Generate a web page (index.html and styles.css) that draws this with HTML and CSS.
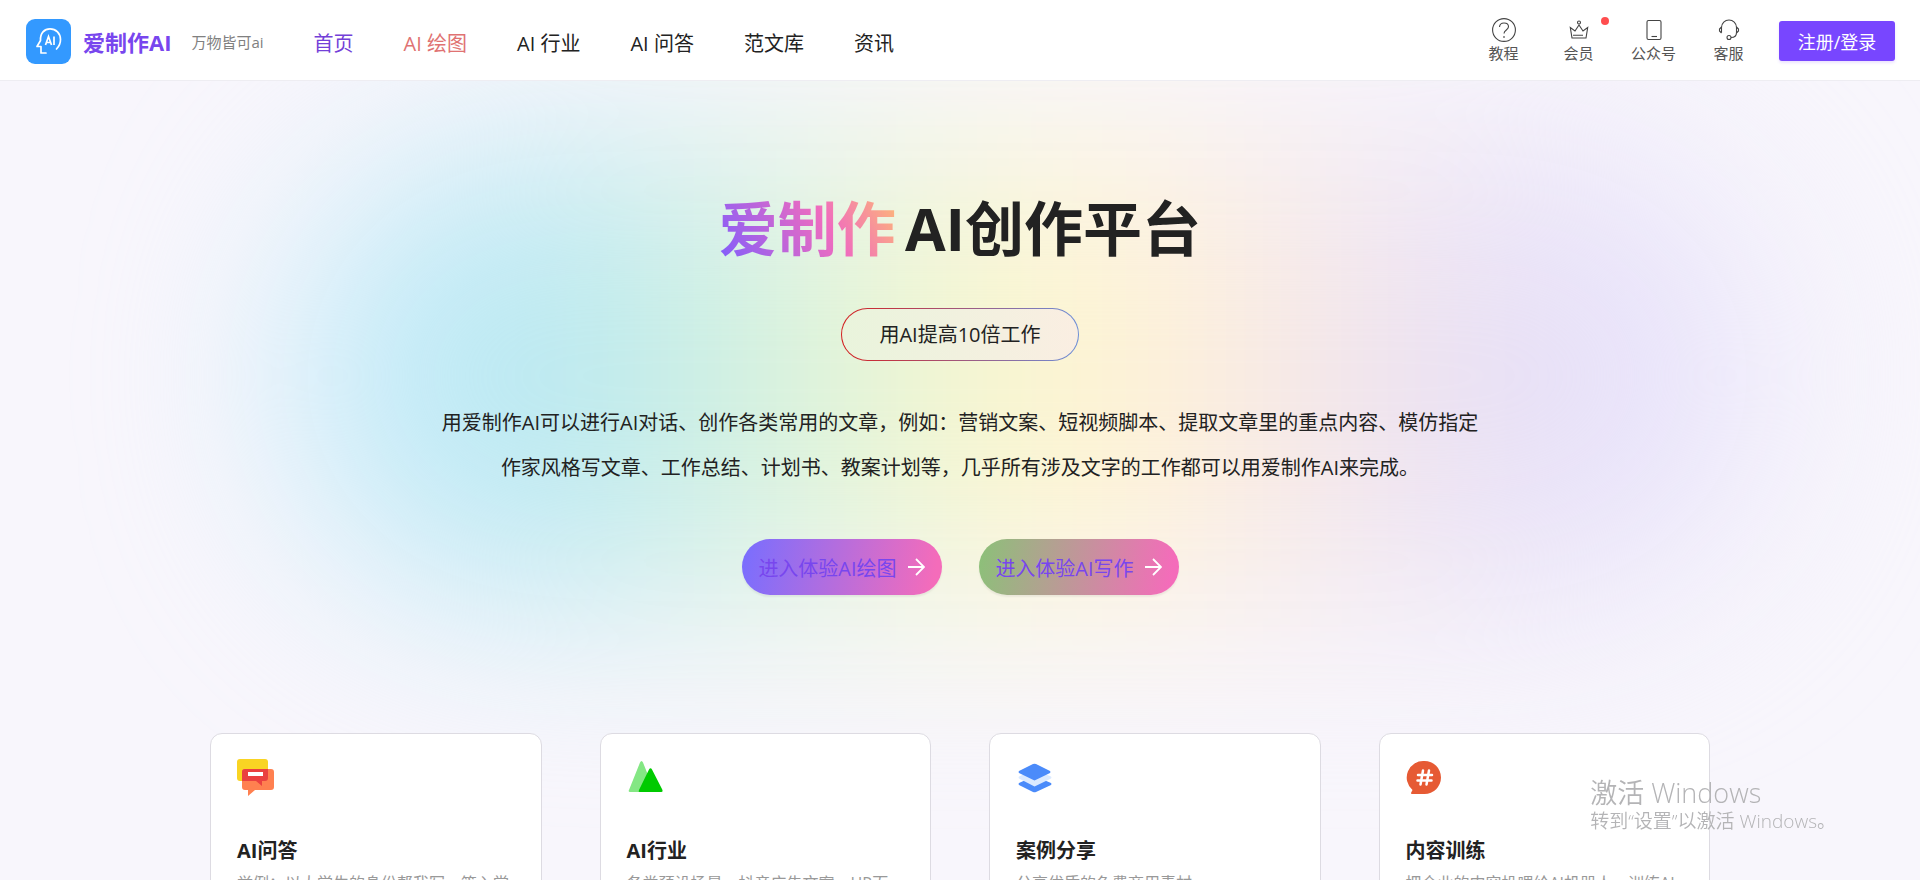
FILE: index.html
```
<!DOCTYPE html>
<html lang="zh-CN">
<head>
  <meta charset="UTF-8" />
  <title>爱制作AI</title>
  <meta name="viewport" content="width=device-width, initial-scale=1.0" />
  <link rel="stylesheet" href="styles.css">
</head>
<body>
  <header class="header">
    <a href="#" class="brand">
      <svg class="logo" viewBox="0 0 45 45">
        <rect width="45" height="45" rx="9" fill="#3399ff" />
        <path d="M20 34h-5v-6.500h-4l3.500-6C14 14 18.500 9.800 24 9.800c6 0 10.500 4.500 10.500 10.700 0 4-1.500 7-4 9.500" fill="none" stroke="#fff" stroke-width="1.700" stroke-linecap="round" stroke-linejoin="round" />
        <path d="M19.500 26l3-8.500 3 8.500M20.500 23.500h4M28 17.500v8.500" fill="none" stroke="#fff" stroke-width="1.700" />
      </svg>
      <span class="brand-name">爱制作AI</span>
      <span class="slogan">万物皆可ai</span>
    </a>
    <nav class="nav">
      <a href="#" class="active">首页</a>
      <a href="#" class="hot">AI 绘图</a>
      <a href="#">AI 行业</a>
      <a href="#">AI 问答</a>
      <a href="#">范文库</a>
      <a href="#">资讯</a>
    </nav>
    <div class="tools">
      <a href="#" class="tool">
        <svg viewBox="0 0 24 24"><circle cx="12" cy="12" r="11.400" /><path d="M7.500 9c.2-2.600 2-4 4.500-4s4.500 1.500 4.500 3.800c0 3.200-4.500 3.200-4.500 6.700M12 18v2" /></svg>
        教程
      </a>
      <a href="#" class="tool">
        <svg viewBox="0 0 24 24"><circle cx="12" cy="4.500" r="1.500" /><path d="M5 20L3.300 9.500l4.700 3.500 4-6 4 6 4.700-3.500L19 20zM6 17.300h10" /></svg>
        会员
        <span class="dot"></span>
      </a>
      <a href="#" class="tool">
        <svg viewBox="0 0 24 24"><rect x="5" y="2.500" width="14" height="19" rx="1.500" /><path d="M9.500 18.500h5.500" /></svg>
        公众号
      </a>
      <a href="#" class="tool">
        <svg viewBox="0 0 24 24"><path d="M4.500 14.500V9.500C4.500 5 8 2 12 2s7.500 3 7.500 7.500v5c0 3-2 5-5.500 5M4.500 9L2.500 11v2l2 2M19.500 9l2 2v2l-2 2" /><circle cx="12" cy="19.500" r="2" /></svg>
        客服
      </a>
      <button class="login-btn">注册/登录</button>
    </div>
  </header>

  <main class="main">
    <section class="hero">
      <h1><span class="gradient-text">爱制作</span><span>AI创作平台</span></h1>
      <div class="tag">用AI提高10倍工作</div>
      <p class="intro">用爱制作AI可以进行AI对话、创作各类常用的文章，例如：营销文案、短视频脚本、提取文章里的重点内容、模仿指定作家风格写文章、工作总结、计划书、教案计划等，几乎所有涉及文字的工作都可以用爱制作AI来完成。</p>
      <div class="actions">
        <a href="#" class="action draw">进入体验AI绘图
          <svg viewBox="0 0 18 18"><path d="M1 9h16M9 1l8 8-8 8" /></svg>
        </a>
        <a href="#" class="action write">进入体验AI写作
          <svg viewBox="0 0 18 18"><path d="M1 9h16M9 1l8 8-8 8" /></svg>
        </a>
      </div>
    </section>

    <section class="cards">
      <div class="card">
        <svg viewBox="0 0 40 40">
          <rect x="0" y="1" width="31" height="22" rx="3" fill="#f9d423" />
          <path d="M8 11h26a3 3 0 0 1 3 3v15a3 3 0 0 1-3 3H18l-7 6v-6H8a3 3 0 0 1-3-3V14a3 3 0 0 1 3-3z" fill="#ff8050" />
          <path d="M8 11h23v9a3 3 0 0 1-3 3h-3v5l-6-5H5v-9a3 3 0 0 1 3-3z" fill="#ea4040" />
          <rect x="11" y="14" width="15" height="4" fill="#fff" />
        </svg>
        <h2>AI问答</h2>
        <p>举例：以大学生的身份帮我写一篇入党申请书</p>
      </div>
      <div class="card">
        <svg viewBox="0 0 40 40">
          <path d="M2 32L13 4.500q1.500-3 3 0L27 32q.5 2-1 2H3q-2 0-1-2z" fill="#84e784" />
          <path d="M12 32L22 11.500q1.500-2.500 3 0L35.500 32q.5 2-1 2H12.500q-1.500 0-.5-2z" fill="#00ca00" />
        </svg>
        <h2>AI行业</h2>
        <p>各类预设场景，抖音广告文案，HR面试问题</p>
      </div>
      <div class="card">
        <svg viewBox="0 0 40 40">
          <path d="M3 25l15.500-7L35 25q1 1 0 2l-15 7q-1.500.7-3 0L3 27q-1-1 0-2z" fill="#4b8bfa" />
          <path d="M3 18.500l15.500-7L35 18.500q1 1 0 2l-16.500 8L3 20.500q-1-1 0-2z" fill="#dceaff" />
          <path d="M3 13l14-7q1.500-.7 3 0l14 7q1 1 0 2l-15.500 7.500L3 15q-1-1 0-2z" fill="#4b8bfa" />
        </svg>
        <h2>案例分享</h2>
        <p>分享优质的免费商用素材</p>
      </div>
      <div class="card">
        <svg viewBox="0 0 40 40">
          <path d="M18.500 3a16.500 16.500 0 1 1 0 33H6q-1.500 0-.8-1.500l1.300-2.500A16.500 16.500 0 0 1 18.500 3z" fill="#e65a34" />
          <path d="M17 12.500l-2.500 14M23 12.500l-2.500 14M12 17h14M11.500 22.500h14" stroke="#fff" stroke-width="2.500" fill="none" stroke-linecap="round" />
        </svg>
        <h2>内容训练</h2>
        <p>把企业的内容投喂给AI机器人，训练AI专属模型</p>
      </div>
    </section>
  </main>

  <div class="watermark">
    <div class="watermark-title">激活 Windows</div>
    <div>转到“设置”以激活 Windows。</div>
  </div>
</body>
</html>
```

FILE: styles.css
```
* {
  margin: 0;
  padding: 0;
  box-sizing: border-box;
}

html, body {
  height: 100%;
}

body {
  font-family: "Open Sans", "Noto Sans CJK SC", sans-serif;
  font-size: 20px;
  color: #222;
  background: #f8f6fc;
  overflow: hidden;
}

a {
  color: inherit;
  text-decoration: none;
}

.header {
  position: relative;
  z-index: 2;
  height: 81px;
  padding: 2px 25px 0 26px;
  display: flex;
  align-items: center;
  background: #fff;
  border-bottom: 1px solid #eeedf2;
  white-space: nowrap;
}

.brand {
  display: flex;
  align-items: center;
}

.logo {
  width: 45px;
  height: 45px;
  margin-right: 12px;
}

.brand-name {
  font-size: 22px;
  font-weight: 700;
  color: #7846ee;
  margin-right: 20px;
}

.slogan {
  font-size: 15px;
  color: #808080;
}

.nav {
  display: flex;
  gap: 50px;
  margin-left: 50px;
  padding-top: 2px;
}

.nav .active {
  color: #7340d8;
}

.nav .hot {
  color: #e07272;
}

.tools {
  display: flex;
  align-items: center;
  margin-left: auto;
}

.tool {
  position: relative;
  width: 75px;
  display: flex;
  flex-direction: column;
  align-items: center;
  font-size: 15px;
  line-height: 22px;
  color: #555;
}

.tool svg {
  width: 24px;
  height: 24px;
  fill: none;
  stroke: #444;
  stroke-width: 1.1;
}

.dot {
  position: absolute;
  top: -1px;
  right: 7px;
  width: 8px;
  height: 8px;
  border-radius: 50%;
  background: #ff4d4f;
}

.login-btn {
  width: 116px;
  height: 40px;
  margin-left: 13px;
  border: none;
  border-radius: 3px;
  background: #7846ff;
  color: #fff;
  font: inherit;
  font-size: 18px;
  box-shadow: 0 2px 3px rgba(120, 70, 255, 0.15);
}

.main {
  position: relative;
}

/* soft rainbow glow behind the hero */
.main::before {
  content: "";
  position: absolute;
  top: 70px;
  left: 15%;
  right: 8%;
  height: 450px;
  border-radius: 225px;
  background: linear-gradient(90deg, #c8ecfb 0%, #b8e8f2 18%, #daf3dd 34%, #fff7cc 50%, #fdeedf 62%, #f0e4ee 73%, #e5dff9 86%, #ebe7fb 100%);
  filter: blur(95px);
}

.hero {
  position: relative;
  padding-top: 103px;
  display: flex;
  flex-direction: column;
  align-items: center;
}

.hero h1 {
  display: flex;
  gap: 9px;
  font-size: 59px;
  line-height: 88px;
  font-weight: 700;
}

.gradient-text {
  background: linear-gradient(60deg, #7b5cff, #f06cbe 60%, #ffc070);
  -webkit-background-clip: text;
  background-clip: text;
  color: transparent;
}

.tag {
  margin-top: 36px;
  padding: 0 37px;
  line-height: 51px;
  border: 1px solid transparent;
  border-radius: 27px;
  background: linear-gradient(90deg, #e9f4dc, #faeee2) padding-box, linear-gradient(90deg, #d42020, #6d8fd8) border-box;
}

.intro {
  max-width: 1040px;
  margin-top: 39px;
  line-height: 45px;
  text-align: center;
}

.actions {
  display: flex;
  gap: 37px;
  margin-top: 49px;
}

.action {
  display: flex;
  align-items: center;
  justify-content: center;
  gap: 10px;
  width: 200px;
  height: 56px;
  border-radius: 28px;
  color: #7846ee;
  box-shadow: 0 2px 2px rgba(0, 0, 0, 0.06);
}

.action svg {
  width: 18px;
  height: 18px;
  fill: none;
  stroke: #fff;
  stroke-width: 1.8;
}

.draw {
  background: linear-gradient(100deg, #786eff, #f46cba 95%);
}

.write {
  background: linear-gradient(100deg, #8bc178, #f46cba 95%);
}

.cards {
  position: relative;
  width: 80%;
  max-width: 1500px;
  margin: 138px auto 0;
  display: grid;
  grid-template-columns: repeat(4, minmax(0, 1fr));
  gap: 58px;
}

.card {
  padding: 24px 28px 24px 26px;
  background: #fff;
  border: 1px solid #dddbe2;
  border-radius: 12px;
}

.card svg {
  display: block;
  width: 40px;
  height: 40px;
}

.card h2 {
  margin-top: 38px;
  font-size: 20px;
  line-height: 30px;
}

.card p {
  margin-top: 4px;
  font-size: 16px;
  line-height: 26px;
  color: #999;
}

.watermark {
  position: fixed;
  right: 84px;
  bottom: 46px;
  z-index: 3;
  font-size: 19px;
  font-weight: 350;
  line-height: 26px;
  color: #b4b4b6;
}

.watermark-title {
  font-size: 27px;
  line-height: 30px;
}
```
